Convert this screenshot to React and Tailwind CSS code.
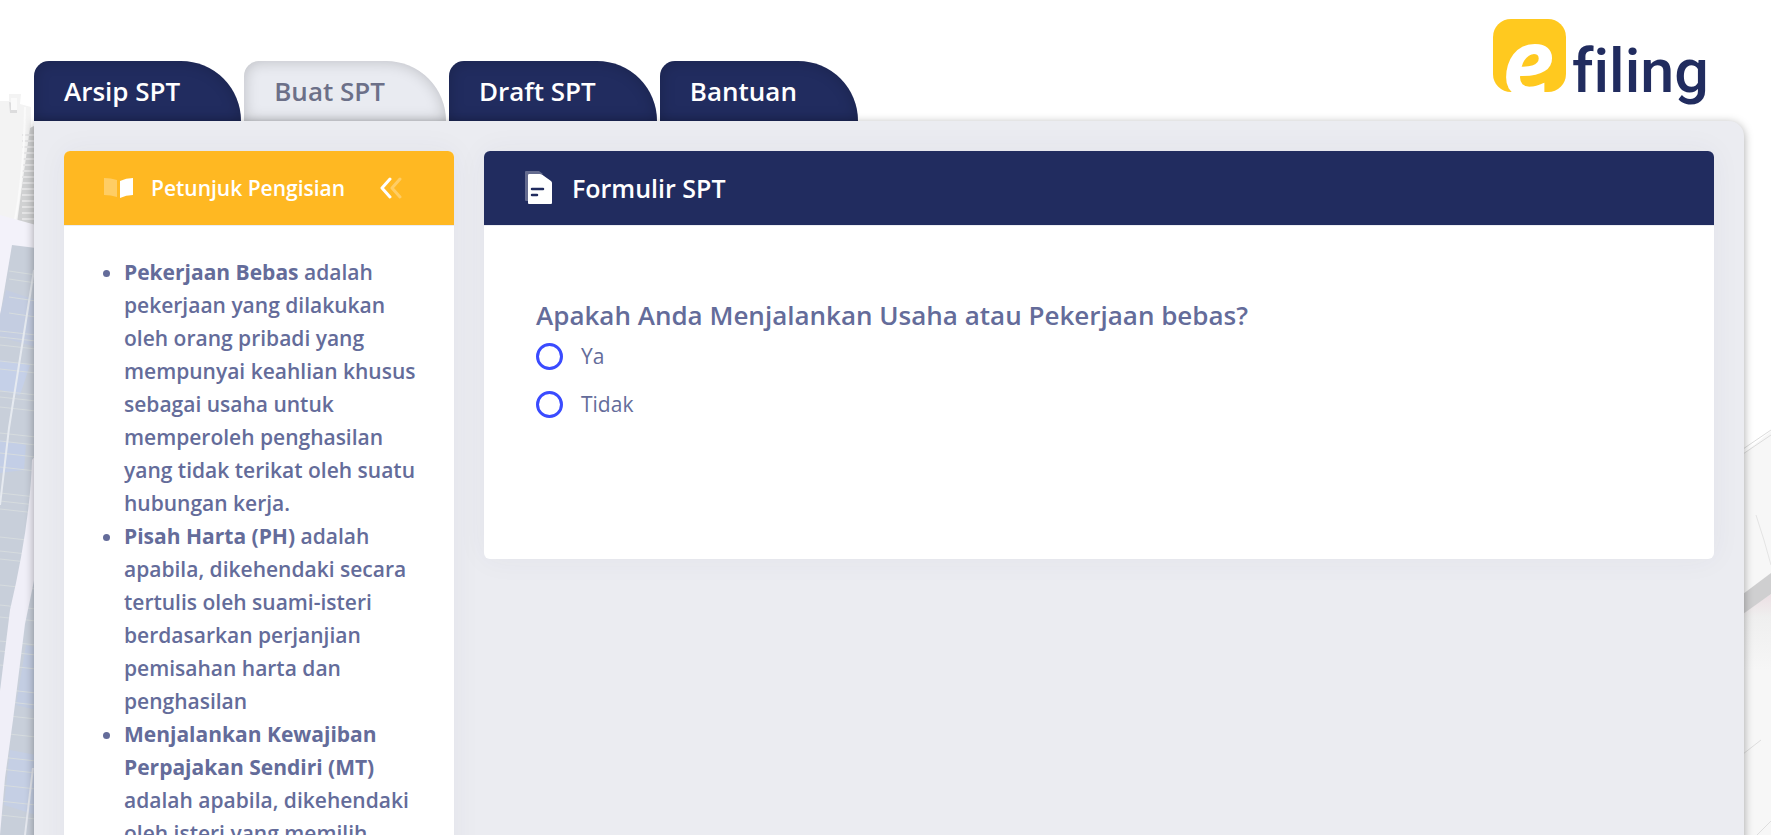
import clsx from 'clsx';

const tabs = [
    { label: 'Arsip SPT' },
    { label: 'Buat SPT', active: true },
    { label: 'Draft SPT' },
    { label: 'Bantuan' },
];

const options = [
    { value: 'ya', label: 'Ya' },
    { value: 'tidak', label: 'Tidak' },
];

const hints = [
    {
        term: 'Pekerjaan Bebas',
        text: 'adalah pekerjaan yang dilakukan oleh orang pribadi yang mempunyai keahlian khusus sebagai usaha untuk memperoleh penghasilan yang tidak terikat oleh suatu hubungan kerja.',
    },
    {
        term: 'Pisah Harta (PH)',
        text: 'adalah apabila, dikehendaki secara tertulis oleh suami-isteri berdasarkan perjanjian pemisahan harta dan penghasilan',
    },
    {
        term: 'Menjalankan Kewajiban Perpajakan Sendiri (MT)',
        text: 'adalah apabila, dikehendaki oleh isteri yang memilih',
    },
];

const ribs = [50, 56, 62, 68, 74, 80, 86, 92, 98, 104, 110, 116, 122, 128, 134];
const floors = [186, 194, 212, 228, 246, 252, 260, 276, 284, 306, 312, 322, 348, 356, 368, 382, 408, 416, 424, 452, 466, 474, 500, 520, 532, 556, 566, 580, 604, 616, 630, 648, 672, 684, 700, 716, 730];

// Faded office tower behind the left edge of the page
const Tower = () => (
    <svg className="absolute left-0 top-[85px]" width="36" height="750" viewBox="0 0 36 750" aria-hidden="true">
        <path d="M0 16 9 16 9 9 21 9 20 19 31 22 31 44 36 44V140H0Z" fill="#f3f3f3" />
        <path d="M9 17 17 19 17 28 10 28Z" fill="#dcdcdd" />
        <path d="M11 13H17V25H11Z" fill="#fafafa" />
        <path d="M30 43 36 40V141L17 138Z" fill="#d0d1d2" />
        {ribs.map((y) => (
            <path key={y} d={`M22 ${y}H36`} stroke="#e4e4e5" strokeWidth="2" />
        ))}
        <path d="M25 22Q24 90 14 140" stroke="#fafafa" strokeWidth="2" fill="none" />
        <path d="M0 130 36 140V750H0Z" fill="#f3f2fa" />
        <path d="M12 160 36 163V750H0V231Z" fill="#c8cfda" />
        <path d="M6 205 36 215V262L0 252V230Z" fill="#c4cde1" />
        <path d="M0 275 30 280 20 310 0 305Z" fill="#c5d0e8" />
        <path d="M0 355 26 360 24 385 0 388Z" fill="#c3cee6" />
        <path d="M26 560 36 562V625L16 620Z" fill="#c3cde2" />
        <path d="M10 665 36 670V730L4 720Z" fill="#c5cfe4" />
        {floors.map((y) => (
            <path key={y} d={`M${y < 231 ? 9 : 0} ${y}L36 ${y + 4}`} stroke="#d6dcde" strokeWidth="1" />
        ))}
        <path d="M34 185Q22 262 9 343L0 420" stroke="#e6eaf0" strokeWidth="2" fill="none" />
        <path d="M36 370 32 375Q30 440 10 525L0 606V750L5 693 13 635 25 539 36 486Z" fill="#f0eff8" />
        <path d="M33 683 25 750" stroke="#e6e9f0" strokeWidth="2" />
    </svg>
);

// Faded paperwork behind the right edge of the page
const Papers = () => (
    <svg className="absolute right-0 top-[400px]" width="28" height="435" viewBox="0 0 28 435" aria-hidden="true">
        <defs>
            <linearGradient id="papers-shade" x1="0" y1="0" x2="0" y2="1">
                <stop offset="0" stopColor="#ecdfe3" />
                <stop offset="0.3" stopColor="#efefef" />
                <stop offset="1" stopColor="#f6f6f6" />
            </linearGradient>
        </defs>
        <path d="M0 54 28 31V435H0Z" fill="#f7f7f7" />
        <path d="M0 49 28 30M0 54 28 35" stroke="#dcdcdc" strokeWidth="1" />
        <path d="M13 115Q22 142 28 165" stroke="#e4e4e4" strokeWidth="1" fill="none" />
        <path d="M0 213 28 194V270H0Z" fill="url(#papers-shade)" />
        <path d="M0 194 28 173V194L0 214Z" fill="#cfcfd0" />
        <path d="M0 354 18 340M14 435 28 421" stroke="#dedede" strokeWidth="1" />
    </svg>
);

const Logo = () => (
    <svg width="224" height="100" viewBox="0 0 224 100" role="img" aria-label="e-filing">
        <rect x="3" y="9" width="73" height="73" rx="18" fill="#ffc91f" />
        <text x="12" y="86" className="font-['Open_Sans',sans-serif] text-[94px] font-bold italic" fill="#fff">
            e
        </text>
        <text x="82" y="82" className="font-['Roboto',sans-serif] text-[61px] font-medium [font-variant-ligatures:none]" fill="#212c5f">
            filing
        </text>
    </svg>
);

const BookIcon = () => (
    <svg width="30" height="22" viewBox="0 0 30 22" fill="#fff" aria-hidden="true">
        <path d="M0 1Q7 1 13 3V20Q7 18 0 18Z" opacity=".3" />
        <path d="M16 4Q22 1 29 1V18Q22 18 16 21Z" />
    </svg>
);

const CollapseIcon = () => (
    <svg width="22" height="22" viewBox="0 0 22 22" fill="none" stroke="#fff" strokeWidth="3" strokeLinecap="round" strokeLinejoin="round" aria-hidden="true">
        <path d="M20 2 12 11 20 20" opacity=".3" />
        <path d="M10 2 2 11 10 20" />
    </svg>
);

const FormIcon = () => (
    <svg width="28" height="34" viewBox="0 0 28 34" fill="#fff" aria-hidden="true">
        <path d="M2 0H15L19 3H4V30H2Q1 30 1 29V1Q1 0 2 0Z" opacity=".3" />
        <path d="M5 3H16Q18 3 20 5L27 10Q28 11 28 12V32Q28 33 27 33H5Q4 33 4 32V4Q4 3 5 3Z" />
        <path d="M8 18H19M8 24H13" stroke="#212c5f" strokeWidth="2.5" strokeLinecap="round" />
    </svg>
);

const Tab = ({ label, active }) => (
    <a
        href="#"
        aria-current={active ? 'page' : undefined}
        className={clsx(
            'h-[60px] rounded-tl-[15px] rounded-tr-[60px] pl-[30px] pr-[61px] text-[26px] leading-[60px] font-semibold shadow-[inset_0_0_15px_rgba(0,0,0,0.2)]',
            active ? 'bg-[#e9ebf1] text-[#6c7088]' : 'bg-[#212c5f] text-white'
        )}
    >
        {label}
    </a>
);

const App = () => (
    <div className="relative h-screen overflow-hidden bg-white px-[34px] font-['Open_Sans',sans-serif] text-[#646c9a]">
        <Tower />
        <Papers />

        <div className="relative mr-[-7px] flex h-full flex-col">
            {/* Tabs and logo */}
            <header className="flex h-[121px] shrink-0 items-end justify-between">
                <nav className="flex gap-[3px]">
                    {tabs.map((tab) => (
                        <Tab key={tab.label} {...tab} />
                    ))}
                </nav>
                <div className="mr-[30px] self-start pt-[10px]">
                    <Logo />
                </div>
            </header>

            <main className="grid grow grid-cols-4 items-start gap-[30px] rounded-tr-[15px] bg-[#ebecf1] p-[30px] shadow-[0_2px_10px_rgba(0,0,0,0.35)]">
                {/* Filling guide */}
                <aside className="rounded-md bg-white shadow-[0_0_30px_rgba(60,60,90,0.05)]">
                    <div className="flex h-[74px] items-center rounded-t-md bg-[#ffb822] px-10">
                        <BookIcon />
                        <h2 className="ml-[17px] text-[21px] leading-[33px] font-semibold text-white">Petunjuk Pengisian</h2>
                        <button type="button" aria-label="Tutup petunjuk" className="ml-auto mr-3">
                            <CollapseIcon />
                        </button>
                    </div>
                    <ul className="list-disc border-t border-[#ebedf2] py-[30px] pl-[60px] pr-[30px] text-[21px] leading-[33px] font-semibold">
                        {hints.map((hint) => (
                            <li key={hint.term}>
                                <strong className="font-bold">{hint.term}</strong> {hint.text}
                            </li>
                        ))}
                    </ul>
                </aside>

                {/* Form */}
                <section className="col-span-3 rounded-md bg-white shadow-[0_0_30px_rgba(60,60,90,0.05)]">
                    <div className="flex h-[74px] items-center gap-5 rounded-t-md bg-[#212c5f] px-10">
                        <FormIcon />
                        <h2 className="text-[25px] leading-[39px] font-semibold text-white">Formulir SPT</h2>
                    </div>
                    <form className="border-t border-[#ebedf2] px-[52px] pt-[70px] pb-[138px]">
                        <fieldset>
                            <legend className="text-[26px] leading-[39px] font-semibold">
                                Apakah Anda Menjalankan Usaha atau Pekerjaan bebas?
                            </legend>
                            <div className="flex flex-col gap-[15px] pt-[5px]">
                                {options.map((option) => (
                                    <label key={option.value} className="flex items-center gap-[18px] text-[21px] leading-[33px]">
                                        <input
                                            type="radio"
                                            name="usaha"
                                            value={option.value}
                                            className="size-[27px] appearance-none rounded-full border-3 border-[#3a4bff] bg-white checked:border-8"
                                        />
                                        {option.label}
                                    </label>
                                ))}
                            </div>
                        </fieldset>
                    </form>
                </section>
            </main>
        </div>
    </div>
);

export default App;
